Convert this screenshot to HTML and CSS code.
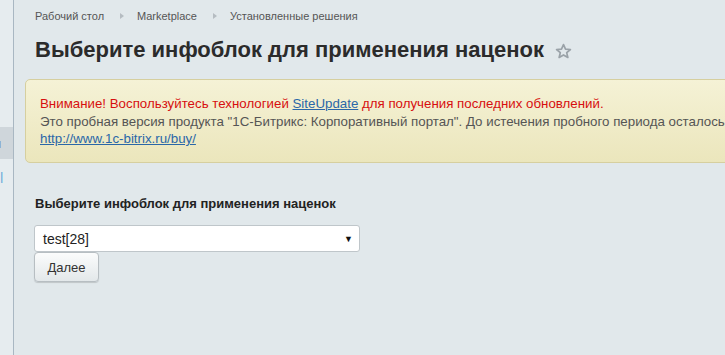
FILE: index.html
```html
<!DOCTYPE html>
<html lang="ru">
<head>
<meta charset="utf-8">
<link rel="stylesheet" href="styles.css">
</head>
<body>
<div class="page">
  <aside class="side">
    <div class="side-item active"><span>и</span></div>
    <div class="side-item link"><span>|</span></div>
  </aside>
  <main class="main">
    <nav class="crumbs">
      <span>Рабочий стол</span>
      <span class="sep"></span>
      <span>Marketplace</span>
      <span class="sep"></span>
      <span>Установленные решения</span>
    </nav>
    <h1 class="title">Выберите инфоблок для применения наценок
      <svg class="star" viewBox="0 0 16 16" width="17" height="17"><path d="M8 1.5l1.9 4.2 4.6.4-3.5 3 1.1 4.5L8 11.2l-4.1 2.4 1.1-4.5-3.5-3 4.6-.4z" fill="none" stroke="#9aa2a8" stroke-width="1.6" stroke-linejoin="round"/></svg>
    </h1>
    <div class="notice">
      <p class="warn">Внимание! Воспользуйтесь технологией <a href="#">SiteUpdate</a> для получения последних обновлений.</p>
      <p class="trial">Это пробная версия продукта "1С-Битрикс: Корпоративный портал". До истечения пробного периода осталось 30 дней.</p>
      <p class="trial"><a href="#">http://www.1c-bitrix.ru/buy/</a></p>
    </div>
    <form class="form">
      <label class="label">Выберите инфоблок для применения наценок</label>
      <div class="select"><span>test[28]</span><span class="arrow">▼</span></div>
      <button type="button" class="btn">Далее</button>
    </form>
  </main>
</div>
</body>
</html>
```
FILE: styles.css
```css
html, body {
  margin: 0;
  height: 100%;
}
body {
  background: #e1e8eb;
  font-family: "Liberation Sans", Arial, sans-serif;
  overflow: hidden;
}
.page {
  display: flex;
  height: 355px;
}
.side {
  width: 13px;
  flex: none;
  background: #e6ecef;
  border-right: 1px solid #a9b7c2;
  padding-top: 127px;
  box-sizing: content-box;
  overflow: hidden;
}
.side-item {
  font-size: 13px;
  overflow: hidden;
  white-space: nowrap;
}
.side-item.active {
  height: 32px;
  background: #cfd6db;
  display: flex;
  align-items: center;
  color: #3a2250;
  font-weight: bold;
}
.side-item.active span {
  margin-left: -7px;
}
.side-item.link {
  margin-top: 12px;
  color: #5ea7d8;
  height: 12px;
  line-height: 12px;
}
.main {
  flex: 1;
  min-width: 0;
  padding-left: 11px;
  overflow: hidden;
}
.crumbs {
  display: flex;
  align-items: center;
  font-size: 11px;
  color: #555;
  padding-left: 10px;
  height: 15px;
  margin-top: 8px;
}
.crumbs .sep {
  width: 0;
  height: 0;
  border-left: 4px solid #b5bcc1;
  border-top: 3px solid transparent;
  border-bottom: 3px solid transparent;
  margin: 0 13px 0 16px;
}
.title {
  margin: 14px 0 0 10px;
  font-size: 22px;
  font-weight: bold;
  color: #2b2b2b;
  display: flex;
  align-items: center;
  height: 26px;
  white-space: nowrap;
}
.star {
  margin-left: 11px;
  margin-top: 2px;
}
.notice {
  margin-top: 16px;
  width: 760px;
  height: 84px;
  border: 1px solid #d6cf9f;
  border-radius: 5px;
  background: linear-gradient(#f5f2d6, #ebe6bc);
  box-sizing: border-box;
  padding: 15px 0 0 14px;
  font-size: 13.3px;
  line-height: 17.5px;
  white-space: nowrap;
}
.notice p {
  margin: 0;
}
.warn {
  color: #d70f0f;
}
.trial {
  color: #555;
}
.notice a {
  color: #2a67a8;
  text-decoration: underline;
}
.form {
  display: flex;
  flex-direction: column;
  align-items: flex-start;
  margin: 33px 0 0 9px;
}
.label {
  font-size: 13px;
  font-weight: bold;
  color: #222;
  margin-left: 1px;
  height: 16px;
  line-height: 16px;
}
.select {
  margin-top: 13px;
  width: 326px;
  height: 27px;
  box-sizing: border-box;
  background: #fff;
  border: 1px solid #bfc6ca;
  border-radius: 3px;
  display: flex;
  align-items: center;
  justify-content: space-between;
  padding: 0 6px 0 8px;
  font-size: 14px;
  color: #222;
}
.select .arrow {
  font-size: 9px;
  color: #111;
}
.btn {
  width: 65px;
  height: 30px;
  border: 1px solid #b7bec2;
  border-radius: 4px;
  background: linear-gradient(#fbfcfc, #e3e8ea);
  box-shadow: 0 1px 1px rgba(0,0,0,0.15);
  font-family: "Liberation Sans", Arial, sans-serif;
  font-size: 13px;
  color: #333;
  padding: 0;
}
```
